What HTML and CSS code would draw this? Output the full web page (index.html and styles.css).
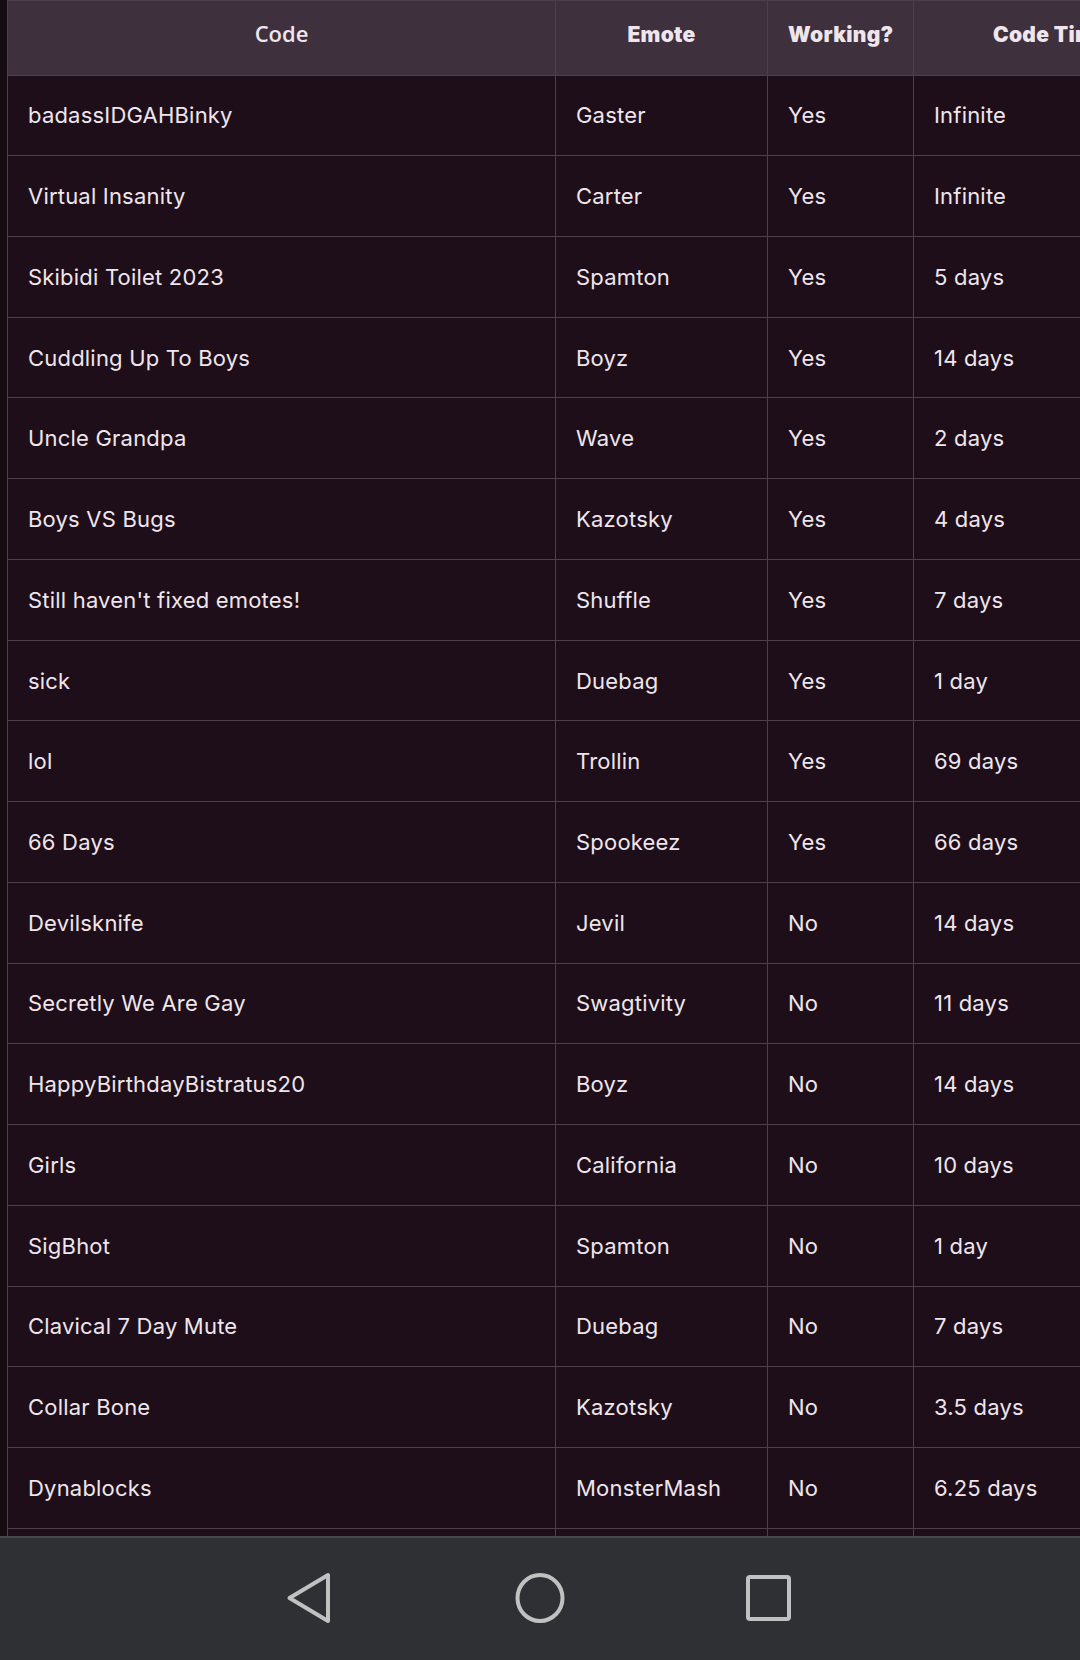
FILE: index.html
```html
<!DOCTYPE html>
<html>
<head>
<meta charset="utf-8">
<link rel="stylesheet" href="styles.css">
</head>
<body>
<div class="page">
  <table class="codes">
    <colgroup>
      <col class="c-code"><col class="c-emote"><col class="c-work"><col class="c-time">
    </colgroup>
    <thead>
      <tr>
        <th class="h-code">Code</th>
        <th>Emote</th>
        <th>Working?</th>
        <th>Code Time</th>
      </tr>
    </thead>
    <tbody>
      <tr><td>badassIDGAHBinky</td><td>Gaster</td><td>Yes</td><td>Infinite</td></tr>
      <tr><td>Virtual Insanity</td><td>Carter</td><td>Yes</td><td>Infinite</td></tr>
      <tr><td>Skibidi Toilet 2023</td><td>Spamton</td><td>Yes</td><td>5 days</td></tr>
      <tr><td>Cuddling Up To Boys</td><td>Boyz</td><td>Yes</td><td>14 days</td></tr>
      <tr><td>Uncle Grandpa</td><td>Wave</td><td>Yes</td><td>2 days</td></tr>
      <tr><td>Boys VS Bugs</td><td>Kazotsky</td><td>Yes</td><td>4 days</td></tr>
      <tr><td>Still haven't fixed emotes!</td><td>Shuffle</td><td>Yes</td><td>7 days</td></tr>
      <tr><td>sick</td><td>Duebag</td><td>Yes</td><td>1 day</td></tr>
      <tr><td>lol</td><td>Trollin</td><td>Yes</td><td>69 days</td></tr>
      <tr><td>66 Days</td><td>Spookeez</td><td>Yes</td><td>66 days</td></tr>
      <tr><td>Devilsknife</td><td>Jevil</td><td>No</td><td>14 days</td></tr>
      <tr><td>Secretly We Are Gay</td><td>Swagtivity</td><td>No</td><td>11 days</td></tr>
      <tr><td>HappyBirthdayBistratus20</td><td>Boyz</td><td>No</td><td>14 days</td></tr>
      <tr><td>Girls</td><td>California</td><td>No</td><td>10 days</td></tr>
      <tr><td>SigBhot</td><td>Spamton</td><td>No</td><td>1 day</td></tr>
      <tr><td>Clavical 7 Day Mute</td><td>Duebag</td><td>No</td><td>7 days</td></tr>
      <tr><td>Collar Bone</td><td>Kazotsky</td><td>No</td><td>3.5 days</td></tr>
      <tr><td>Dynablocks</td><td>MonsterMash</td><td>No</td><td>6.25 days</td></tr>
      <tr><td>&nbsp;</td><td>&nbsp;</td><td>&nbsp;</td><td>&nbsp;</td></tr>
    </tbody>
  </table>
</div>
<nav class="navbar">
  <svg class="nav-icon nav-back" width="47" height="54" viewBox="0 0 47 54">
    <path d="M43 4 L43 50 L4.5 27 Z" fill="none" stroke="#c1c1c1" stroke-width="4" stroke-linejoin="round"/>
  </svg>
  <svg class="nav-icon nav-home" width="54" height="54" viewBox="0 0 54 54">
    <ellipse cx="27" cy="27" rx="22.5" ry="23" fill="none" stroke="#c1c1c1" stroke-width="4"/>
  </svg>
  <svg class="nav-icon nav-recent" width="49" height="50" viewBox="0 0 49 50">
    <rect x="4" y="4" width="41" height="42" rx="2" fill="none" stroke="#c1c1c1" stroke-width="4"/>
  </svg>
</nav>
</body>
</html>
```

FILE: styles.css
```css
html, body {
  margin: 0;
  padding: 0;
  background: #170b14;
  overflow: hidden;
  height: 1660px;
}

.page {
  padding-left: 7px;
  width: 1300px;
}

.codes {
  border-collapse: collapse;
  table-layout: fixed;
  width: 1180px;
  font-family: "Inter", "Noto Sans", sans-serif;
  color: #eee6ec;
  font-size: 22px;
  letter-spacing: 0.2px;
}

.c-code { width: 548px; }
.c-emote { width: 212px; }
.c-work { width: 146px; }
.c-time { width: 274px; }

.codes th,
.codes td {
  border: 1.5px solid #4d3f4b;
  padding: 0 20px;
  text-align: left;
  white-space: nowrap;
  overflow: hidden;
}

.codes thead tr {
  height: 74.5px;
  background: #3f303d;
}

.codes th {
  text-align: center;
  font-family: "Inter", sans-serif;
  font-weight: 900;
  font-size: 21px;
  letter-spacing: 0.3px;
  color: #eee6ec;
  padding-bottom: 6px;
}

.codes th.h-code {
  font-family: "Open Sans", "Noto Sans", sans-serif;
  font-weight: 600;
  font-size: 22px;
  letter-spacing: 0;
  padding-bottom: 10px;
}

.codes tbody tr {
  height: 80.74px;
  background: #1e0e1a;
}

.codes td {
  vertical-align: middle;
}

.navbar {
  position: fixed;
  left: 0;
  right: 0;
  bottom: 0;
  height: 122px;
  background: #2f3033;
  border-top: 2px solid #45464a;
  display: flex;
  align-items: center;
  justify-content: flex-start;
  padding-left: 285px;
}

.nav-icon {
  display: block;
  flex: none;
  margin-top: -2px;
}

.nav-back { margin-right: 181px; }
.nav-home { margin-right: 177px; }
```
